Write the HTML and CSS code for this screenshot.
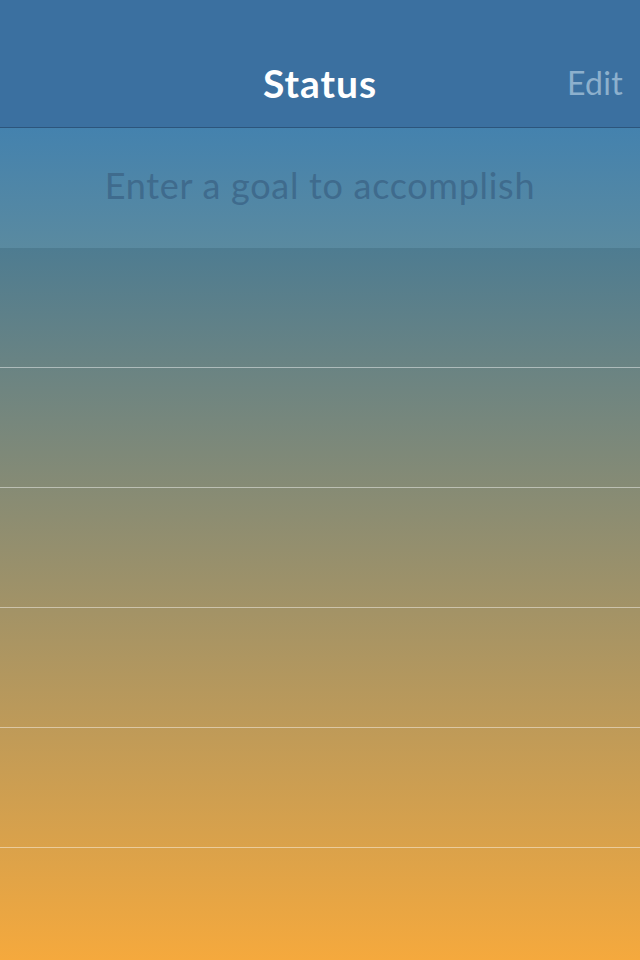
FILE: index.html
```html
<!DOCTYPE html>
<html>
<head>
<meta charset="utf-8">
<link rel="stylesheet" href="styles.css">
</head>
<body>
<div class="app">
  <header class="navbar">
    <span class="spacer"></span>
    <h1 class="title">Status</h1>
    <span class="edit">Edit</span>
  </header>
  <div class="entry">
    <input class="goal-input" type="text" placeholder="Enter a goal to accomplish">
  </div>
  <div class="list">
    <div class="row"></div>
    <div class="row"></div>
    <div class="row"></div>
    <div class="row"></div>
    <div class="row"></div>
    <div class="row last"></div>
  </div>
</div>
</body>
</html>
```
FILE: styles.css
```css
* { box-sizing: border-box; }
html, body { margin: 0; padding: 0; }
body {
  width: 640px;
  height: 960px;
  overflow: hidden;
  font-family: Lato, "Open Sans", sans-serif;
}
.app {
  display: flex;
  flex-direction: column;
  height: 960px;
}
.navbar {
  height: 128px;
  background: #3b70a0;
  border-bottom: 1px solid #2c557c;
  display: grid;
  grid-template-columns: 1fr auto 1fr;
  align-items: center;
  padding: 38px 17px 0 17px;
}
.title {
  margin: 0;
  color: #ffffff;
  font-size: 39px;
  font-weight: 700;
  letter-spacing: 1px;
}
.edit {
  justify-self: end;
  color: #8db0cd;
  font-size: 32px;
  font-weight: 400;
  letter-spacing: 0.3px;
}
.entry {
  height: 120px;
  background: linear-gradient(to bottom, #4482ae, #5a8aa0);
  display: flex;
  align-items: center;
  justify-content: center;
  padding-bottom: 6px;
}
.goal-input {
  width: 100%;
  border: 0;
  background: transparent;
  text-align: center;
  font-family: Lato, "Open Sans", sans-serif;
  font-size: 36px;
  letter-spacing: 0.7px;
  color: #3e6a8c;
  outline: none;
  padding: 0;
}
.goal-input::placeholder {
  color: #3f6b8d;
  opacity: 1;
}
.list {
  flex: 1;
  background: linear-gradient(to bottom, #4e7c91, #f5a93d);
  display: flex;
  flex-direction: column;
}
.row {
  height: 120px;
  border-bottom: 1px solid rgba(255, 255, 255, 0.45);
}
.row.last {
  flex: 1;
  border-bottom: 0;
}
```
